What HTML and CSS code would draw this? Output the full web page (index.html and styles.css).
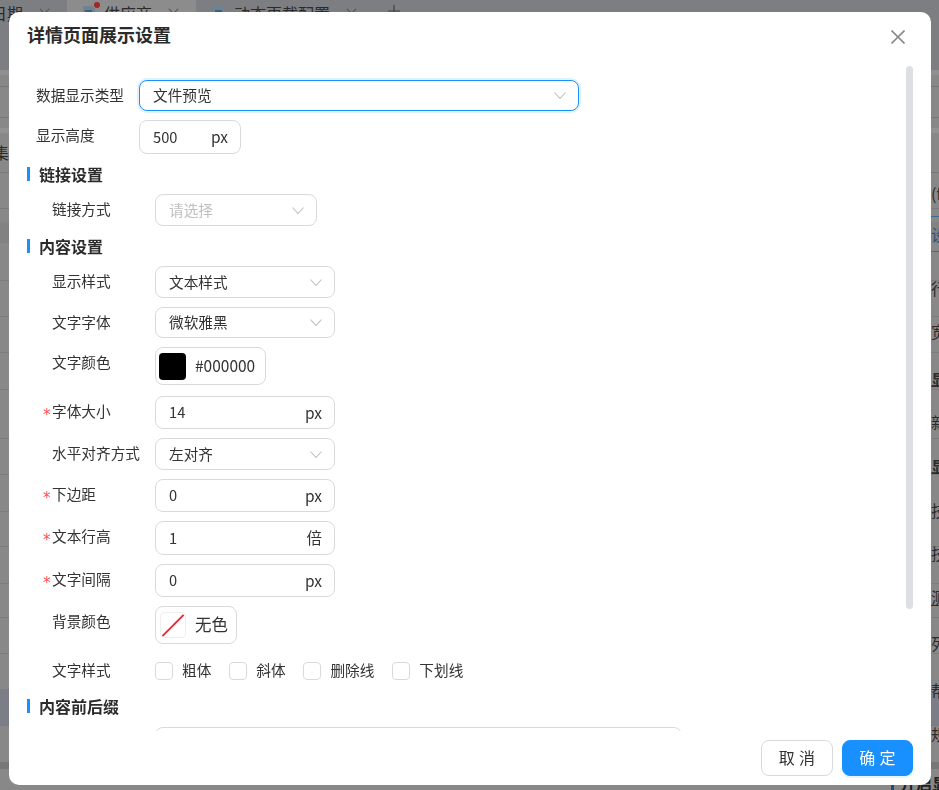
FILE: index.html
```html
<!DOCTYPE html>
<html lang="zh-CN">
<head>
    <meta charset="UTF-8">
    <meta name="viewport" content="width=device-width, initial-scale=1.0">
    <title>详情页面展示设置</title>
    <link rel="stylesheet" href="styles.css">
</head>
<body>

<!-- 遮罩后面的页面 -->
<div class="tabs">
    <span class="tab tab-first">
        <span class="tab-date">日期</span>
        <svg class="tab-close" viewBox="0 0 12 12"><path d="M1 1l10 10M11 1L1 11"/></svg>
    </span>
    <span class="tab tab-active">
        <svg class="tab-icon" viewBox="0 0 14 16"><path d="M1 1h9l3 3v11H1z"/><path class="tab-icon-line" d="M3 6h7M3 9h7"/></svg>
        <i class="tab-dot"></i>
        <span class="tab-text">供应商</span>
        <svg class="tab-close" viewBox="0 0 12 12"><path d="M1 1l10 10M11 1L1 11"/></svg>
    </span>
    <span class="tab tab-last">
        <svg class="tab-icon" viewBox="0 0 14 16"><path d="M1 1h9l3 3v11H1z"/><path class="tab-icon-line" d="M3 6h7M3 9h7"/></svg>
        <span class="tab-text">动态更载配置</span>
        <svg class="tab-close" viewBox="0 0 12 12"><path d="M1 1l10 10M11 1L1 11"/></svg>
    </span>
    <svg class="tab-add" viewBox="0 0 12 12"><path d="M6 0v12M0 6h12"/></svg>
</div>

<span class="behind-left">集</span>
<div class="behind-right">
    <span>(f</span>
    <span class="behind-link">设</span>
    <span>行</span>
    <span>宽</span>
    <span class="behind-bold gap-4">显</span>
    <span>新</span>
    <span class="behind-bold">显</span>
    <span>技</span>
    <span>技</span>
    <span class="behind-under">测</span>
    <span class="gap-3">列</span>
    <span class="gap-3">帮</span>
    <span>规</span>
</div>
<div class="behind-heading">开启显</div>

<div class="dialog">
    <div class="dialog-header">
        <h2>详情页面展示设置</h2>
        <svg class="close-icon" viewBox="0 0 14 14"><path d="M0.5 0.5l13 13M13.5 0.5l-13 13"/></svg>
    </div>

    <div class="dialog-body">
        <div class="row">
            <label>数据显示类型</label>
            <div class="field field-focus w-440 h-31">
                <span>文件预览</span>
                <svg class="arrow" viewBox="0 0 12 7"><path d="M0.5 0.5L6 6.5l5.5-6"/></svg>
            </div>
        </div>
        <div class="row last">
            <label>显示高度</label>
            <div class="field w-102 h-34">
                <span>500</span>
                <span class="unit">px</span>
            </div>
        </div>

        <div class="section-title">链接设置</div>
        <div class="row sub last">
            <label>链接方式</label>
            <div class="field w-162 h-32">
                <span class="placeholder">请选择</span>
                <svg class="arrow" viewBox="0 0 12 7"><path d="M0.5 0.5L6 6.5l5.5-6"/></svg>
            </div>
        </div>

        <div class="section-title">内容设置</div>
        <div class="row sub">
            <label>显示样式</label>
            <div class="field w-180 h-32">
                <span>文本样式</span>
                <svg class="arrow" viewBox="0 0 12 7"><path d="M0.5 0.5L6 6.5l5.5-6"/></svg>
            </div>
        </div>
        <div class="row sub">
            <label>文字字体</label>
            <div class="field w-180 h-31">
                <span>微软雅黑</span>
                <svg class="arrow" viewBox="0 0 12 7"><path d="M0.5 0.5L6 6.5l5.5-6"/></svg>
            </div>
        </div>
        <div class="row sub wide-gap">
            <label>文字颜色</label>
            <div class="color-box w-111">
                <i class="swatch"></i>
                <span>#000000</span>
            </div>
        </div>
        <div class="row sub">
            <label><i class="star">*</i>字体大小</label>
            <div class="field w-180 h-33">
                <span>14</span>
                <span class="unit">px</span>
            </div>
        </div>
        <div class="row sub">
            <label>水平对齐方式</label>
            <div class="field w-180 h-32">
                <span>左对齐</span>
                <svg class="arrow" viewBox="0 0 12 7"><path d="M0.5 0.5L6 6.5l5.5-6"/></svg>
            </div>
        </div>
        <div class="row sub">
            <label><i class="star">*</i>下边距</label>
            <div class="field w-180 h-33">
                <span>0</span>
                <span class="unit">px</span>
            </div>
        </div>
        <div class="row sub">
            <label><i class="star">*</i>文本行高</label>
            <div class="field w-180 h-34">
                <span>1</span>
                <span class="unit">倍</span>
            </div>
        </div>
        <div class="row sub">
            <label><i class="star">*</i>文字间隔</label>
            <div class="field w-180 h-33">
                <span>0</span>
                <span class="unit">px</span>
            </div>
        </div>
        <div class="row sub big-gap">
            <label>背景颜色</label>
            <div class="color-box w-82">
                <svg class="swatch-none" viewBox="0 0 26 26"><path d="M1.5 25L24.5 2"/></svg>
                <span class="color-none">无色</span>
            </div>
        </div>
        <div class="row sub check-row">
            <label>文字样式</label>
            <div class="checks">
                <span class="check"><i></i>粗体</span>
                <span class="check"><i></i>斜体</span>
                <span class="check"><i></i>删除线</span>
                <span class="check"><i></i>下划线</span>
            </div>
        </div>

        <div class="section-title title-tight">内容前后缀</div>
        <div class="row sub">
            <div class="field-large"></div>
        </div>

        <div class="scrollbar"></div>
    </div>

    <div class="dialog-footer">
        <button class="btn">取 消</button>
        <button class="btn btn-primary">确 定</button>
    </div>
</div>

</body>
</html>
```

FILE: styles.css
```css
* {
    box-sizing: border-box;
}
html, body {
    height: 100%;
}
body {
    margin: 0;
    overflow: hidden;
    position: relative;
    font-family: "Noto Sans CJK SC", "Liberation Sans", sans-serif;
    font-size: 14.67px;
    color: #333;
    /* 遮罩下的表格线 */
    background: linear-gradient(to bottom,
        #7d7e82 0, #7d7e82 70px,
        #8f8f8f 70px, #8f8f8f 75px,
        #888 75px, #888 86px,
        #777 86px, #777 87px,
        #888 87px, #888 117px,
        #777 117px, #777 118px,
        #888 118px, #888 128px,
        #929292 128px, #929292 133px,
        #888 133px, #888 172px,
        #777 172px, #777 173px,
        #888 173px, #888 208px,
        #7a7a7a 208px, #7a7a7a 209px,
        #888 209px, #888 222px,
        #828282 222px, #828282 243px,
        #888 243px, #888 280px,
        #7c7c7c 280px, #7c7c7c 281px,
        #888 281px, #888 316px,
        #7c7c7c 316px, #7c7c7c 317px,
        #888 317px, #888 352px,
        #7c7c7c 352px, #7c7c7c 353px,
        #888 353px, #888 389px,
        #7c7c7c 389px, #7c7c7c 390px,
        #888 390px, #888 438px,
        #7c7c7c 438px, #7c7c7c 439px,
        #888 439px, #888 474px,
        #7c7c7c 474px, #7c7c7c 475px,
        #888 475px, #888 511px,
        #7c7c7c 511px, #7c7c7c 512px,
        #888 512px, #888 546px,
        #7c7c7c 546px, #7c7c7c 547px,
        #888 547px, #888 583px,
        #7c7c7c 583px, #7c7c7c 584px,
        #888 584px, #888 617px,
        #7c7c7c 617px, #7c7c7c 618px,
        #888 618px, #888 653px,
        #7c7c7c 653px, #7c7c7c 654px,
        #888 654px, #888 689px,
        #7b7e87 689px, #7b7e87 726px,
        #888 726px, #888 762px,
        #777 762px, #777 769px,
        #888 769px, #888 790px);
}

/* 背景页面 */
.tabs {
    display: flex;
    height: 26px;
    background: #7d7e82;
    color: #2b2b2b;
    font-size: 16px;
    line-height: 26px;
}
.tab {
    display: flex;
    align-items: center;
    position: relative;
}
.tab-first {
    width: 67px;
}
.tab-date {
    margin-left: -9px;
    white-space: nowrap;
}
.tab-active {
    width: 129px;
    padding-left: 15px;
    background: #8c8c8c;
}
.tab-last {
    width: 192px;
    padding-left: 16px;
}
.tab-text {
    margin-left: 8px;
    white-space: nowrap;
}
.tab-icon {
    width: 14px;
    height: 16px;
    flex: none;
    fill: #6d8292;
}
.tab-icon-line {
    stroke: #33536b;
    stroke-width: 1.5;
}
.tab-dot {
    position: absolute;
    left: 27px;
    top: 2px;
    width: 6px;
    height: 6px;
    border-radius: 50%;
    background: #a3262a;
}
.tab-close {
    width: 11px;
    height: 11px;
    flex: none;
    margin-left: 16px;
    fill: none;
    stroke: #555;
    stroke-width: 1.2;
}
.tab-add {
    width: 12px;
    height: 12px;
    margin: 5px 0 0 0;
    fill: none;
    stroke: #444;
    stroke-width: 1.2;
}
.behind-left {
    position: absolute;
    left: -7px;
    top: 141px;
    font-size: 16px;
    line-height: 22px;
    color: #2b2b2b;
}
.behind-right {
    position: absolute;
    left: 931px;
    top: 172px;
    display: flex;
    flex-direction: column;
    font-size: 16px;
    color: #2b2b2b;
}
.behind-right span {
    height: 43.6px;
    line-height: 43.6px;
    white-space: nowrap;
}
.behind-right .behind-link {
    color: #25527f;
    height: 36px;
    margin-bottom: 15px;
    border-top: 1px solid #3f6a92;
    border-bottom: 1px solid #3f6a92;
    line-height: 34px;
}
.behind-right .behind-bold {
    font-weight: 700;
}
.behind-right .gap-4 {
    margin-top: 4px;
}
.behind-right .gap-3 {
    margin-top: 3px;
}
.behind-under {
    text-decoration: underline;
}
.behind-heading {
    position: absolute;
    left: 891px;
    top: 772px;
    padding-left: 6px;
    border-left: 3px solid #1c4f80;
    font-size: 16px;
    line-height: 22px;
    font-weight: 700;
    color: #222;
    white-space: nowrap;
}

/* 弹窗 */
.dialog {
    position: fixed;
    left: 9px;
    top: 12px;
    width: 922px;
    height: 773px;
    display: flex;
    flex-direction: column;
    background: #fff;
    border-radius: 10px;
}
.dialog-header {
    height: 54px;
    flex: none;
    display: flex;
    justify-content: space-between;
    align-items: flex-start;
    padding: 11px 26px 0 18px;
}
.dialog-header h2 {
    margin: 0;
    font-size: 18px;
    line-height: 22px;
    font-weight: 700;
    color: #2b2b2b;
}
.close-icon {
    width: 14px;
    height: 14px;
    margin-top: 7px;
    fill: none;
    stroke: #8a8a8a;
    stroke-width: 1.6;
}
.dialog-body {
    flex: 1;
    position: relative;
    overflow: hidden;
    padding: 14px 0 0 18px;
}
.scrollbar {
    position: absolute;
    right: 18px;
    top: 0;
    width: 7px;
    height: 543px;
    border-radius: 4px;
    background: #dcdfe4;
}
.section-title {
    position: relative;
    height: 22px;
    line-height: 20px;
    margin-bottom: 8px;
    padding-left: 12px;
    font-size: 16px;
    font-weight: 700;
    color: #2b2b2b;
}
.section-title::before {
    content: "";
    position: absolute;
    left: 0;
    top: 3px;
    width: 3px;
    height: 14px;
    background: #1890ff;
}
.title-tight {
    margin-bottom: 9px;
}
.row {
    display: flex;
    align-items: flex-start;
    padding-left: 9px;
    margin-bottom: 9px;
}
.row.sub {
    padding-left: 25px;
}
.row.last {
    margin-bottom: 10px;
}
.row.wide-gap {
    margin-bottom: 11px;
}
.row.big-gap {
    margin-bottom: 18px;
}
.row.check-row {
    margin-bottom: 16px;
}
.row label {
    width: 103px;
    flex: none;
    line-height: 29px;
    white-space: nowrap;
}
.row.check-row label {
    line-height: 16px;
}
.star {
    display: inline-block;
    width: 9px;
    margin-left: -9px;
    font-family: "DejaVu Sans", sans-serif;
    font-size: 15px;
    line-height: 0;
    vertical-align: -3px;
    font-style: normal;
    color: #ff4d4f;
}
.field {
    display: flex;
    justify-content: space-between;
    align-items: center;
    padding: 0 12px 0 13px;
    background: #fff;
    border: 1px solid #d9d9d9;
    border-radius: 8px;
    flex: none;
}
.field span, .color-box span {
    margin-bottom: 2px;
}
.unit {
    font-size: 15.5px;
}
.field-focus {
    border-color: #1890ff;
    box-shadow: 0 0 0 2px rgba(24, 144, 255, 0.12);
}
.w-440 { width: 440px; }
.w-102 { width: 102px; }
.w-162 { width: 162px; }
.w-180 { width: 180px; }
.w-111 { width: 111px; }
.w-82 { width: 82px; }
.h-31 { height: 31px; }
.h-32 { height: 32px; }
.h-33 { height: 33px; }
.h-34 { height: 34px; }
.placeholder {
    color: #bfbfbf;
}
.arrow {
    width: 12px;
    height: 7px;
    fill: none;
    stroke: #bfbfbf;
    stroke-width: 1.1;
}
.color-box {
    display: flex;
    align-items: center;
    gap: 9px;
    height: 38px;
    padding-left: 3px;
    border: 1px solid #d9d9d9;
    border-radius: 8px;
    flex: none;
    font-size: 15.5px;
    white-space: nowrap;
}
.color-box .color-none {
    font-size: 16.5px;
}
.swatch {
    width: 27px;
    height: 27px;
    border-radius: 4px;
    background: #000;
}
.swatch-none {
    width: 26px;
    height: 26px;
    margin-left: 1px;
    fill: none;
    stroke: #f5222d;
    stroke-width: 2;
    border: 1px solid #eee;
    border-radius: 4px;
}
.checks {
    display: flex;
    gap: 17.9px;
}
.check {
    display: flex;
    align-items: flex-start;
    gap: 9px;
    height: 18px;
    line-height: 16px;
}
.check i {
    width: 18px;
    height: 18px;
    border: 1px solid #d9d9d9;
    border-radius: 4px;
}
.field-large {
    width: 527px;
    height: 80px;
    margin-left: 103px;
    border: 1px solid #d9d9d9;
    border-radius: 8px;
}
.dialog-footer {
    height: 54px;
    flex: none;
    display: flex;
    justify-content: flex-end;
    gap: 9px;
    padding: 9px 18px 0 0;
}
.btn {
    width: 72px;
    height: 36px;
    padding: 0 0 2px;
    background: #fff;
    border: 1px solid #d9d9d9;
    border-radius: 8px;
    font-family: inherit;
    font-size: 16px;
    letter-spacing: 0.3px;
    color: #333;
}
.btn-primary {
    width: 71px;
    background: #1890ff;
    border-color: #1890ff;
    color: #fff;
    box-shadow: 0 2px 0 rgba(24, 144, 255, 0.1);
}
```
